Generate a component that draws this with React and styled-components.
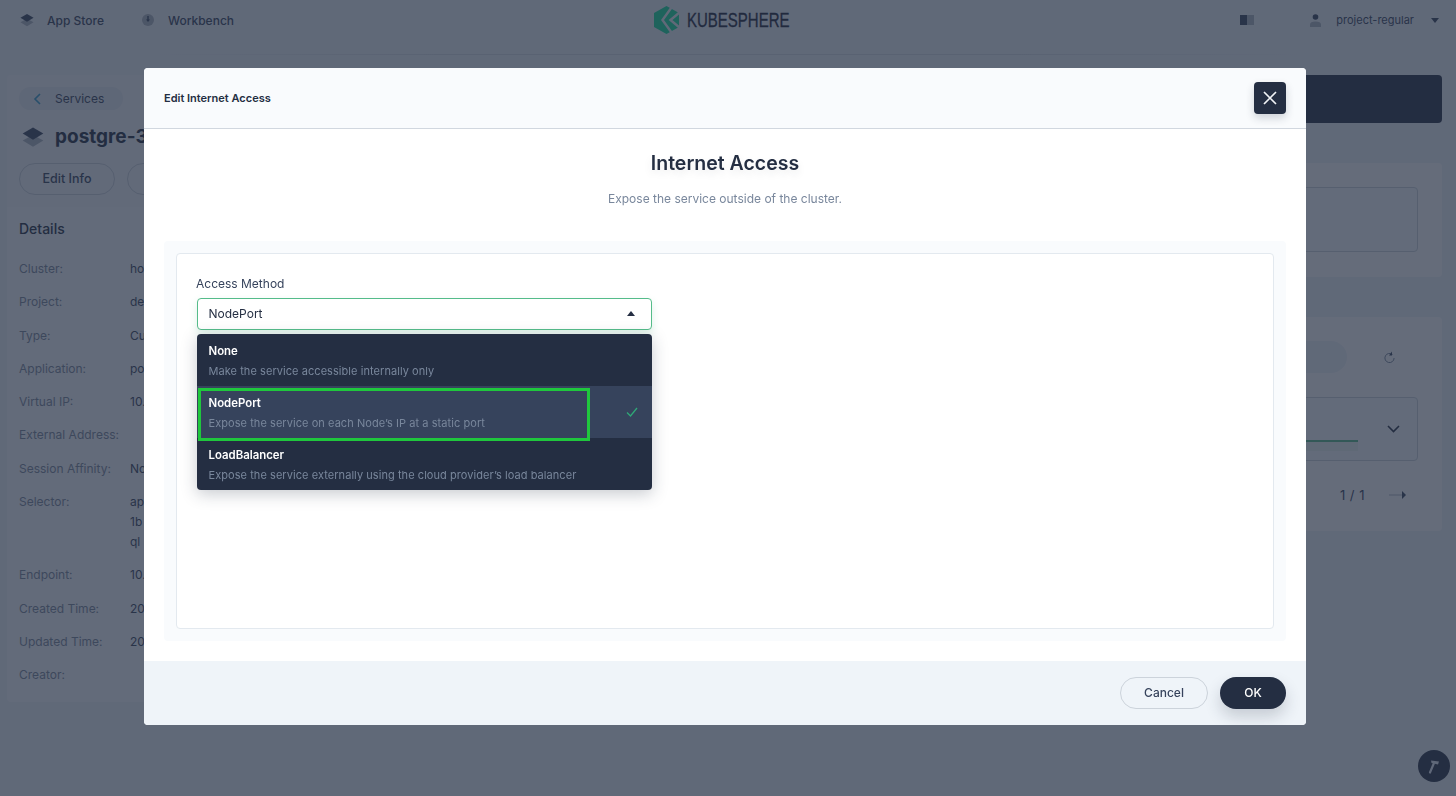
import React from "react";
import styled, { createGlobalStyle } from "styled-components";

const GlobalStyle = createGlobalStyle`
    html, body {
        margin: 0;
        padding: 0;
        height: 100%;
        overflow: hidden;
        background: #eff4f9;
        font-family: Inter, "Liberation Sans", sans-serif;
        color: #242e42;
    }
    * {
        box-sizing: border-box;
    }
`;

const Page = styled.div`
    width: 1456px;
    height: 796px;
    overflow: hidden;
    background: #eff4f9;
`;

const Header = styled.header`
    height: 55px;
    display: grid;
    grid-template-columns: 1fr auto 1fr;
    padding: 0 17px 14px 20px;
    align-items: center;
    border-bottom: 1px solid transparent;
    border-image: linear-gradient(90deg, transparent 10%, #d8dee5 30%, #d8dee5 70%, transparent 90%) 1;
`;

const NavLeft = styled.nav`
    display: flex;
    align-items: center;
    gap: 37px;
`;

const NavItem = styled.div`
    display: flex;
    align-items: center;
    gap: 13px;
    font-size: 12px;
    font-weight: 500;
    color: #36435c;
`;

const Logo = styled.div`
    display: flex;
    align-items: center;
    gap: 8px;
    margin-left: -14px;
`;

const LogoText = styled.span`
    font-family: "Liberation Sans", sans-serif;
    font-size: 20px;
    line-height: 1;
    color: #1c2438;
    -webkit-text-stroke: 0.35px #1c2438;
    transform: scaleX(0.75);
    transform-origin: left center;
    width: 104px;
    white-space: nowrap;
`;

const NavRight = styled.div`
    display: flex;
    align-items: center;
    justify-content: flex-end;
    font-size: 11px;
    color: #36435c;
`;

const BookIcon = styled.svg`
    margin-right: 56px;
`;

const UserName = styled.span`
    margin: 0 17px 0 15px;
`;

const Main = styled.main`
    display: grid;
    grid-template-columns: 380px 1fr;
    gap: 20px;
    padding: 20px 14px 0 7px;
`;

const LeftColumn = styled.div`
    display: flex;
    flex-direction: column;
`;

const SummaryCard = styled.section`
    height: 132px;
    padding: 12px;
    background: #f4f7fb;
    border-radius: 4px 4px 0 0;
`;

const BackPill = styled.div`
    width: 104px;
    height: 23px;
    border-radius: 12px;
    background: #e7edf3;
    display: flex;
    align-items: center;
    gap: 14px;
    padding-left: 14px;
    font-size: 12px;
    color: #36435c;
`;

const Title = styled.div`
    margin: 13px 0 0 3px;
    display: flex;
    align-items: center;
    gap: 11px;
    font-size: 19px;
    line-height: 28px;
    font-weight: 700;
    color: #242e42;
`;

const ActionRow = styled.div`
    margin-top: 12px;
    display: flex;
    gap: 12px;
`;

const GhostButton = styled.div`
    width: 96px;
    height: 32px;
    padding-bottom: 1px;
    border: 1px solid #ccd3db;
    border-radius: 16px;
    display: flex;
    align-items: center;
    justify-content: center;
    font-size: 12.5px;
    font-weight: 500;
    color: #36435c;
`;

const DetailsCard = styled.section`
    height: 495px;
    background: #f9fbfd;
    border-radius: 0 0 4px 4px;
    padding: 13px 12px;
`;

const DetailsTitle = styled.h3`
    margin: 0 0 21px;
    font-size: 14px;
    line-height: 18px;
    font-weight: 500;
    color: #242e42;
`;

const DetailRow = styled.div`
    display: grid;
    grid-template-columns: 111px 1fr;
    font-size: 12px;
    line-height: 20px;
    margin-bottom: 13.3px;
`;

const DetailKey = styled.span`
    color: #79879c;
`;

const DetailValue = styled.span`
    color: #36435c;
`;

const RightColumn = styled.div`
    display: flex;
    flex-direction: column;
`;

const TopBar = styled.div`
    height: 48px;
    background: #242e42;
    border-radius: 4px;
`;

const Panel = styled.section`
    height: ${(p) => p.$height}px;
    margin-top: 40px;
    background: #ffffff;
    border-radius: 4px;
    padding: 24px 24px 0 24px;
`;

const InnerBox = styled.div`
    height: ${(p) => p.$height}px;
    border: 1px solid #ccd3db;
    border-radius: 4px;
    background: #f9fbfd;
`;

const Toolbar = styled.div`
    display: flex;
    justify-content: flex-end;
    align-items: center;
    gap: 36px;
    height: 32px;
    margin-bottom: 24px;
    padding-right: 23px;
`;

const GreyPill = styled.div`
    width: 120px;
    height: 32px;
    border-radius: 16px;
    background: #eff4f9;
`;

const ProgressRow = styled.div`
    display: flex;
    align-items: center;
    height: 100%;
    justify-content: flex-end;
    gap: 29px;
    padding-right: 17px;
`;

const ProgressBar = styled.div`
    width: 300px;
    height: 11px;
    margin-top: 32px;
    border-top: 2px solid #55bc8a;
    background: #eaf6f0;
`;

const Pager = styled.div`
    display: flex;
    justify-content: flex-end;
    align-items: center;
    gap: 24px;
    margin-top: 26px;
    padding-right: 12px;
    font-size: 13px;
    color: #36435c;
    letter-spacing: 0.5px;
`;

const Overlay = styled.div`
    position: fixed;
    inset: 0;
    background: rgba(35, 45, 65, 0.7);
    backdrop-filter: blur(0.5px);
`;

const Modal = styled.div`
    position: fixed;
    left: 144px;
    top: 68px;
    width: 1162px;
    height: 657px;
    display: flex;
    flex-direction: column;
    background: #ffffff;
    border-radius: 4px;
    overflow: hidden;
`;

const ModalHeader = styled.div`
    height: 61px;
    flex: none;
    display: flex;
    align-items: center;
    justify-content: space-between;
    padding: 0 20px;
    background: #f9fbfd;
    border-bottom: 1px solid #d1d7df;
`;

const ModalTitle = styled.div`
    font-size: 11px;
    font-weight: 600;
    color: #242e42;
`;

const CloseButton = styled.button`
    width: 32px;
    height: 32px;
    padding: 0;
    border: none;
    border-radius: 4px;
    background: #242e42;
    box-shadow: 0 4px 8px rgba(36, 46, 66, 0.2);
    display: flex;
    align-items: center;
    justify-content: center;
`;

const ModalBody = styled.div`
    flex: 1;
    padding: 0 20px;
    display: flex;
    flex-direction: column;
`;

const Heading = styled.h2`
    margin: 21px 0 0;
    text-align: center;
    font-size: 19.5px;
    line-height: 26px;
    font-weight: 600;
    color: #242e42;
    text-shadow: 0 4px 8px rgba(36, 46, 66, 0.1);
`;

const SubHeading = styled.p`
    margin: 13px 0 0;
    text-align: center;
    font-size: 12px;
    line-height: 20px;
    color: #79879c;
`;

const FormWrap = styled.div`
    margin-top: 32px;
    height: 400px;
    padding: 12px;
    background: #f9fbfd;
    border-radius: 4px;
`;

const FormCard = styled.div`
    height: 100%;
    padding: 20px;
    background: #ffffff;
    border: 1px solid #e3e9ef;
    border-radius: 4px;
`;

const Label = styled.div`
    font-size: 12px;
    line-height: 20px;
    color: #36435c;
    margin: 0 0 4px -1px;
`;

const SelectWrap = styled.div`
    width: 455px;
    position: relative;
`;

const SelectBox = styled.div`
    height: 32px;
    padding: 0 11px 1px 10.5px;
    display: flex;
    align-items: center;
    justify-content: space-between;
    font-size: 12px;
    color: #242e42;
    background: #ffffff;
    border: 1px solid #55bc8a;
    border-radius: 4px;
    box-shadow: 0 4px 8px rgba(85, 188, 138, 0.2);
`;

const Caret = styled.span`
    width: 0;
    height: 0;
    margin-right: 5px;
    border-left: 4.5px solid transparent;
    border-right: 4.5px solid transparent;
    border-bottom: 5px solid #242e42;
`;

const Menu = styled.div`
    position: absolute;
    left: 0;
    right: 0;
    top: 36px;
    background: #242e42;
    border-radius: 4px;
    overflow: hidden;
    box-shadow: 0 4px 16px rgba(36, 46, 66, 0.25);
`;

const Option = styled.div`
    height: 52px;
    padding: 7px 12px 5px 11.5px;
    display: flex;
    align-items: center;
    justify-content: space-between;
    background: ${(p) => (p.$selected ? "#36435c" : "transparent")};
`;

const OptionName = styled.div`
    font-size: 11.4px;
    line-height: 20px;
    font-weight: 600;
    color: #ffffff;
`;

const OptionDesc = styled.div`
    font-size: 11px;
    line-height: 20px;
    letter-spacing: 0.06px;
    color: #79879c;
`;

const CheckIcon = styled.svg`
    margin: 0 2px 2px 0;
`;

const Highlight = styled.div`
    position: absolute;
    left: 1px;
    top: 90px;
    width: 392px;
    height: 53px;
    border: 3px solid #1fc73d;
    pointer-events: none;
`;

const ModalFooter = styled.div`
    height: 64px;
    flex: none;
    display: flex;
    justify-content: flex-end;
    align-items: center;
    gap: 12px;
    padding: 0 20px;
    background: #eff4f9;
`;

const CancelButton = styled.button`
    width: 88px;
    height: 32px;
    padding: 0 0 2px;
    border: 1px solid #ccd3db;
    border-radius: 16px;
    background: transparent;
    font-family: inherit;
    font-size: 12px;
    font-weight: 500;
    color: #36435c;
`;

const OkButton = styled.button`
    width: 66px;
    height: 32px;
    padding: 0 0 2px;
    border: none;
    border-radius: 16px;
    background: #242e42;
    box-shadow: 0 8px 16px rgba(36, 46, 66, 0.2);
    font-family: inherit;
    font-size: 12px;
    font-weight: 500;
    color: #ffffff;
`;

const ToolButton = styled.div`
    position: fixed;
    left: 1418px;
    top: 750px;
    width: 32px;
    height: 32px;
    border-radius: 50%;
    background: #242e42;
    display: flex;
    align-items: center;
    justify-content: center;
`;

function StackIcon({ size = 16, top = "#36435c", bottom = "#abb4be" }) {
    return (
        <svg width={size} height={size} viewBox="0 0 16 16">
            <path d="M8 6.500 15.500 10.500 8 15 .5 10.500Z" fill={bottom} />
            <path d="M8 1 15.500 5.500 8 10 .5 5.500Z" fill={top} />
        </svg>
    );
}

function KubeLogo() {
    return (
        <svg width="25" height="28" viewBox="0 0 25 28">
            <path d="M12.500 0 25 7v14l-12.500 7L0 21V7Z" fill="#12e09c" />
            <path d="M17.500 1.500 8.500 14l9 12.500" fill="none" stroke="#eff4f9" strokeWidth="2.400" />
            <path d="M25.500 6.500 16.500 14l9 7.500" fill="none" stroke="#eff4f9" strokeWidth="2.400" />
        </svg>
    );
}

const details = [
    ["Cluster:", "host"],
    ["Project:", "demo"],
    ["Type:", "Custom"],
    ["Application:", "postgre"],
    ["Virtual IP:", "10.233"],
    ["External Address:", ""],
    ["Session Affinity:", "None"],
    ["Selector:", <>app<br />1b<br />ql</>],
    ["Endpoint:", "10.233"],
    ["Created Time:", "2021"],
    ["Updated Time:", "2021"],
    ["Creator:", ""],
];

const options = [
    { name: "None", desc: "Make the service accessible internally only" },
    { name: "NodePort", desc: "Expose the service on each Node’s IP at a static port", selected: true },
    { name: "LoadBalancer", desc: "Expose the service externally using the cloud provider’s load balancer" },
];

export default function App() {
    return (
        <Page>
            <GlobalStyle />
            <Header>
                <NavLeft>
                    <NavItem><StackIcon size={14} />App Store</NavItem>
                    <NavItem>
                        <svg width="14" height="14" viewBox="0 0 14 14">
                            <circle cx="7" cy="7" r="6" fill="#abb4be" />
                            <path d="M6.300 3h1.400v3.500H9L7 9 5 6.500h1.300Z" fill="#36435c" />
                        </svg>
                        Workbench
                    </NavItem>
                </NavLeft>
                <Logo>
                    <KubeLogo />
                    <LogoText>KUBESPHERE</LogoText>
                </Logo>
                <NavRight>
                    <BookIcon width="14" height="10" viewBox="0 0 14 10">
                        <path d="M0 0h7v10H0Z" fill="#36435c" />
                        <path d="M7 0h7v10H7Z" fill="#abb4be" />
                    </BookIcon>
                    <svg width="11" height="13" viewBox="0 0 11 13">
                        <circle cx="5.500" cy="3" r="2.800" fill="#36435c" />
                        <path d="M0 13v-2.500C0 8.500 2 7.500 5.500 7.500S11 8.500 11 10.500V13Z" fill="#abb4be" />
                    </svg>
                    <UserName>project-regular</UserName>
                    <svg width="8" height="5" viewBox="0 0 8 5"><path d="M0 0h8L4 5Z" fill="#36435c" /></svg>
                </NavRight>
            </Header>
            <Main>
                <LeftColumn>
                    <SummaryCard>
                        <BackPill>
                            <svg width="8" height="12" viewBox="0 0 8 12"><path d="M7 1 2 6l5 5" fill="none" stroke="#329dce" strokeWidth="1.600" /></svg>
                            Services
                        </BackPill>
                        <Title><StackIcon size={22} />postgre-3wz4h2</Title>
                        <ActionRow>
                            <GhostButton>Edit Info</GhostButton>
                            <GhostButton>More</GhostButton>
                        </ActionRow>
                    </SummaryCard>
                    <DetailsCard>
                        <DetailsTitle>Details</DetailsTitle>
                        {details.map(([key, value]) => (
                            <DetailRow key={key}>
                                <DetailKey>{key}</DetailKey>
                                <DetailValue>{value}</DetailValue>
                            </DetailRow>
                        ))}
                    </DetailsCard>
                </LeftColumn>
                <RightColumn>
                    <TopBar />
                    <Panel $height={114}>
                        <InnerBox $height={65} />
                    </Panel>
                    <Panel $height={214}>
                        <Toolbar>
                            <GreyPill />
                            <svg width="12" height="13" viewBox="0 0 12 13">
                                <path d="M9.500 3.500a4.600 4.600 0 1 0 1.600 3.500" fill="none" stroke="#79879c" strokeWidth="1" />
                                <path d="M9 .5v4H6Z" fill="#36435c" />
                            </svg>
                        </Toolbar>
                        <InnerBox $height={64}>
                            <ProgressRow>
                                <ProgressBar />
                                <svg width="13" height="8" viewBox="0 0 13 8"><path d="M1 1 6.500 6.500 12 1" fill="none" stroke="#242e42" strokeWidth="1.600" /></svg>
                            </ProgressRow>
                        </InnerBox>
                        <Pager>
                            <span>1 / 1</span>
                            <svg width="17" height="8" viewBox="0 0 17 8"><path d="M0 3.500h13v1H0Z" fill="#abb4be" /><path d="M13 0l4 4-4 4Z" fill="#36435c" /></svg>
                        </Pager>
                    </Panel>
                </RightColumn>
            </Main>
            <Overlay />
            <ToolButton>
                <svg width="16" height="16" viewBox="0 0 16 16">
                    <path d="M4 14.500 7.800 5.500" stroke="#5f6879" strokeWidth="2.200" strokeLinecap="round" />
                    <path d="M5 2.500 13 3.500 12 6.500 5.500 5Z" fill="#5f6879" />
                </svg>
            </ToolButton>
            <Modal>
                <ModalHeader>
                    <ModalTitle>Edit Internet Access</ModalTitle>
                    <CloseButton aria-label="Close">
                        <svg width="14" height="14" viewBox="0 0 14 14">
                            <path d="M1 1 13 13M13 1 1 13" stroke="#f0f2f5" strokeWidth="1.700" />
                        </svg>
                    </CloseButton>
                </ModalHeader>
                <ModalBody>
                    <Heading>Internet Access</Heading>
                    <SubHeading>Expose the service outside of the cluster.</SubHeading>
                    <FormWrap>
                        <FormCard>
                            <Label>Access Method</Label>
                            <SelectWrap>
                                <SelectBox>
                                    NodePort
                                    <Caret />
                                </SelectBox>
                                <Menu>
                                    {options.map((o) => (
                                        <Option key={o.name} $selected={o.selected}>
                                            <div>
                                                <OptionName>{o.name}</OptionName>
                                                <OptionDesc>{o.desc}</OptionDesc>
                                            </div>
                                            {o.selected && (
                                                <CheckIcon width="12" height="10" viewBox="0 0 12 10">
                                                    <path d="M1 5.500 4.500 9 11 1" fill="none" stroke="#2fa877" strokeWidth="1.300" />
                                                </CheckIcon>
                                            )}
                                        </Option>
                                    ))}
                                </Menu>
                                <Highlight />
                            </SelectWrap>
                        </FormCard>
                    </FormWrap>
                </ModalBody>
                <ModalFooter>
                    <CancelButton>Cancel</CancelButton>
                    <OkButton>OK</OkButton>
                </ModalFooter>
            </Modal>
        </Page>
    );
}
